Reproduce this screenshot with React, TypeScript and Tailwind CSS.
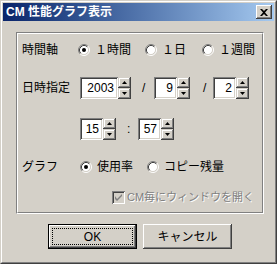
import type { ReactNode } from 'react'

const font = { fontFamily: '"Liberation Sans", "Noto Sans CJK JP", sans-serif' }

function Radio({ checked, label, className }: { checked?: boolean; label: string; className?: string }) {
  return (
    <div className={`flex items-center gap-[5px] ${className ?? ''}`}>
      <svg width="12" height="12" viewBox="0 0 12 12" className="shrink-0">
        <circle cx="6" cy="6" r="4.5" fill="#fff" />
        <path d="M2.11 9.89 A5.5 5.5 0 0 1 9.89 2.11" fill="none" stroke="#808080" />
        <path d="M9.89 2.11 A5.5 5.5 0 0 1 2.11 9.89" fill="none" stroke="#fff" />
        <path d="M2.82 9.18 A4.5 4.5 0 0 1 9.18 2.82" fill="none" stroke="#404040" />
        <path d="M9.18 2.82 A4.5 4.5 0 0 1 2.82 9.18" fill="none" stroke="#d4d0c8" />
        {checked && <circle cx="6" cy="6" r="2" fill="#000" />}
      </svg>
      <span className="text-[12px] leading-none text-black whitespace-nowrap">{label}</span>
    </div>
  )
}

function SpinBtn({ up }: { up?: boolean }) {
  return (
    <div className="flex-1 flex items-center justify-center bg-[#d4d0c8] shadow-[inset_-1px_-1px_#404040,inset_1px_1px_#d4d0c8,inset_-2px_-2px_#808080,inset_2px_2px_#fff]">
      <svg width="5" height="3" viewBox="0 0 5 3">
        {up ? <path d="M2.5 0 L5 3 L0 3 Z" fill="#000" /> : <path d="M0 0 L5 0 L2.5 3 Z" fill="#000" />}
      </svg>
    </div>
  )
}

function Spin({ value, width }: { value: string; width: string }) {
  return (
    <div className="flex h-[22px]">
      <div className={`${width} h-full bg-white flex items-center justify-end pr-[4px] text-[12px] text-black shadow-[inset_1px_1px_#808080,inset_-1px_-1px_#fff,inset_2px_2px_#404040,inset_-2px_-2px_#d4d0c8]`}>
        {value}
      </div>
      <div className="w-[13px] h-full flex flex-col">
        <SpinBtn up />
        <SpinBtn />
      </div>
    </div>
  )
}

function Button({ children, isDefault }: { children: ReactNode; isDefault?: boolean }) {
  return (
    <div className={`w-[89px] h-[25px] relative flex items-center justify-center bg-[#d4d0c8] text-[12px] text-black ${isDefault ? 'border border-black shadow-[inset_-1px_-1px_#404040,inset_1px_1px_#fff,inset_-2px_-2px_#808080]' : 'shadow-[inset_-1px_-1px_#404040,inset_1px_1px_#fff,inset_-2px_-2px_#808080,inset_2px_2px_#d4d0c8]'}`}>
      {isDefault && <div className="absolute inset-[3px] border border-dotted border-black" />}
      <span className="relative">{children}</span>
    </div>
  )
}

export default function App() {
  return (
    <div className="w-[279px] h-[267px] bg-white" style={font}>
      <div className="w-[277px] h-[264px] bg-[#d4d0c8] border border-t-[#d4d0c8] border-l-[#d4d0c8] border-r-[#404040] border-b-[#404040]">
        <div className="h-full border border-t-white border-l-white border-r-[#808080] border-b-[#808080] p-[1px] flex flex-col">
          {/* title bar */}
          <div className="h-[18px] flex items-center justify-between pl-[3px] pr-[2px] bg-gradient-to-r from-[#0a246a] to-[#a6caf0]">
            <span className="text-white font-bold text-[12px] leading-none">CM 性能グラフ表示</span>
            <div className="w-[16px] h-[14px] bg-[#d4d0c8] flex items-center justify-center shadow-[inset_-1px_-1px_#404040,inset_1px_1px_#fff,inset_-2px_-2px_#808080]">
              <svg width="8" height="7" viewBox="0 0 8 7">
                <path d="M0 0 L2 0 L4 2 L6 0 L8 0 L5 3.5 L8 7 L6 7 L4 5 L2 7 L0 7 L3 3.5 Z" fill="#000" />
              </svg>
            </div>
          </div>

          {/* group box */}
          <div className="mt-[11px] ml-[13px] w-[248px] h-[182px] border border-t-[#808080] border-l-[#808080] border-r-white border-b-white">
            <div className="h-full border border-t-white border-l-white border-r-[#808080] border-b-[#808080] pl-[4px] text-[12px] text-black">
              <div className="mt-[6px] h-[20px] flex items-center">
                <span className="w-[56px]">時間軸</span>
                <Radio checked label="１時間" className="w-[67px]" />
                <Radio label="１日" className="w-[57px]" />
                <Radio label="１週間" />
              </div>

              <div className="mt-[17px] h-[22px] flex items-center">
                <span className="w-[58px]">日時指定</span>
                <Spin value="2003" width="w-[38px]" />
                <span className="w-[23px] pl-[11px]">/</span>
                <Spin value="9" width="w-[23px]" />
                <span className="w-[23px] pl-[13px]">/</span>
                <Spin value="2" width="w-[23px]" />
              </div>

              <div className="mt-[19px] h-[22px] flex items-center pl-[58px]">
                <Spin value="15" width="w-[23px]" />
                <span className="w-[22px] pl-[11px]">:</span>
                <Spin value="57" width="w-[23px]" />
              </div>

              <div className="mt-[17px] h-[20px] flex items-center">
                <span className="w-[58px]">グラフ</span>
                <Radio checked label="使用率" className="w-[67px]" />
                <Radio label="コピー残量" />
              </div>

              <div className="mt-[10px] h-[20px] flex items-center pl-[90px] gap-[2px]">
                <div className="w-[13px] h-[13px] shrink-0 bg-[#d4d0c8] flex items-center justify-center shadow-[inset_1px_1px_#808080,inset_-1px_-1px_#fff,inset_2px_2px_#404040,inset_-2px_-2px_#d4d0c8]">
                  <svg width="7" height="7" viewBox="0 0 7 7">
                    <path d="M0 2 L0 5 L2 7 L7 2 L7 0 L2 5 Z" fill="#808080" />
                  </svg>
                </div>
                <span className="text-[11px] whitespace-nowrap text-[#808080] [text-shadow:1px_1px_0_#fff]">CM毎にウィンドウを開く</span>
              </div>
            </div>
          </div>

          {/* buttons */}
          <div className="mt-[10px] flex gap-[6px] pl-[45px]">
            <Button isDefault>OK</Button>
            <Button>キャンセル</Button>
          </div>
        </div>
      </div>
    </div>
  )
}
